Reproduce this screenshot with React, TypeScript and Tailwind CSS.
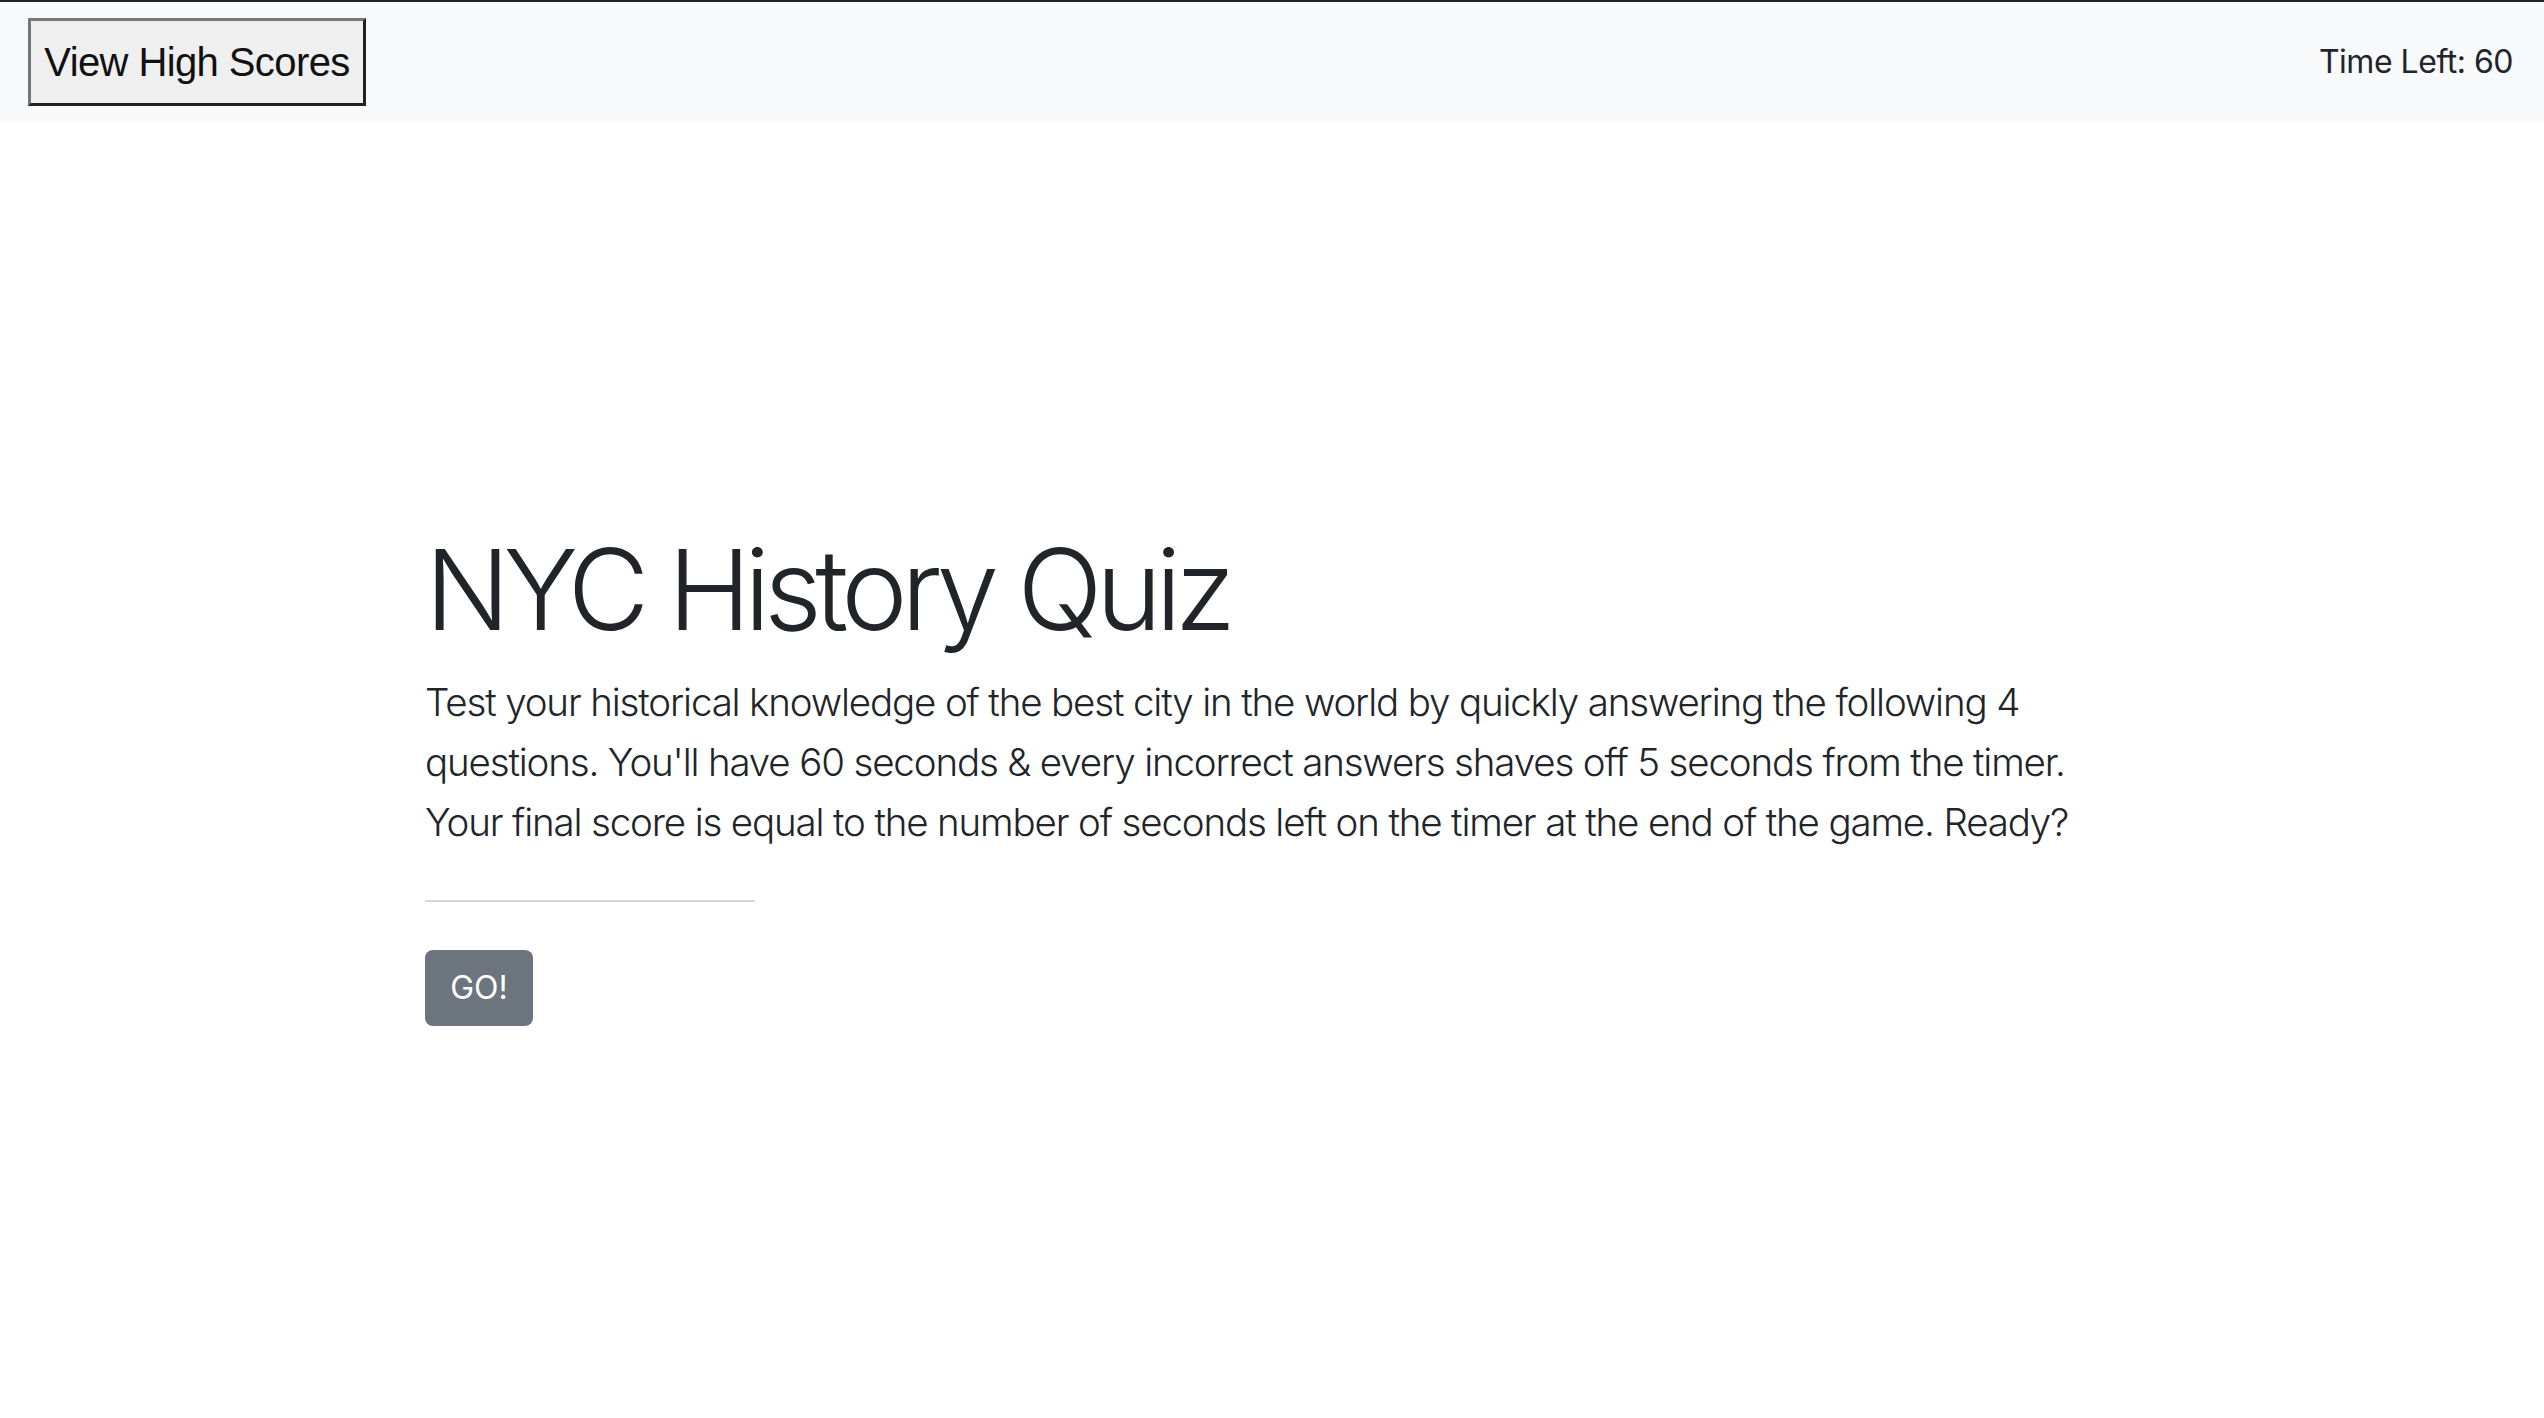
import React from 'react';

const lines = [
  'Test your historical knowledge of the best city in the world by quickly answering the following 4',
  "questions. You'll have 60 seconds & every incorrect answers shaves off 5 seconds from the timer.",
  'Your final score is equal to the number of seconds left on the timer at the end of the game. Ready?',
];

export default function App() {
  return (
    <div className="min-h-screen bg-white font-['Inter',sans-serif] text-[#212529]">
      {/* Top bar */}
      <header className="flex items-center justify-between border-t-2 border-[#222222] bg-[#f8f9fa] py-4 pl-[28px] pr-[31px]">
        <button className="h-[88px] w-[338px] border-[3px] border-t-[#767676] border-l-[#767676] border-r-[#222222] border-b-[#222222] bg-[#efefef] font-['Liberation_Sans',Arial,sans-serif] text-[40px] tracking-[-0.015em] text-[#111111]">
          View High Scores
        </button>
        <span className="text-[32px] leading-[48px] tracking-[-0.015em]">Time Left: 60</span>
      </header>

      {/* Intro */}
      <main className="px-[425px] pt-[400px]">
        <h1 className="mb-[16px] text-[112px] font-light leading-[1.2] tracking-[-0.058em]">
          NYC History Quiz
        </h1>
        <p className="text-[38.5px] font-light leading-[60px] tracking-[-0.03em]">
          {lines.map((l) => (
            <span key={l} className="block whitespace-nowrap">
              {l}
            </span>
          ))}
        </p>
        <hr className="mt-[48px] mb-[48px] w-[330px] border-t-2 border-[#d6d6d6]" />
        <button className="h-[76px] w-[108px] rounded-[8px] bg-[#6c757d] text-[32px] text-white">
          GO!
        </button>
      </main>
    </div>
  );
}
